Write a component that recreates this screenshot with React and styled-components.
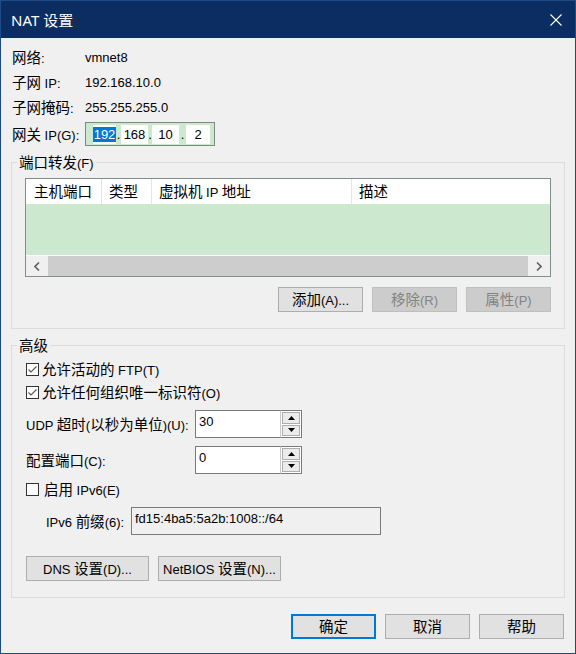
import React from 'react';
import styled, { createGlobalStyle } from 'styled-components';

const GlobalStyle = createGlobalStyle`
  * { box-sizing: border-box; }
  html, body { margin: 0; padding: 0; background: #f0f0f0; }
  body {
    font-family: "Liberation Sans", "Noto Sans CJK SC", sans-serif;
    font-size: 13px;
    color: #000;
  }
`;

const Window = styled.div`
  width: 576px;
  height: 654px;
  border: 1px solid #1f4a8a;
  background: #f0f0f0;
  display: flex;
  flex-direction: column;
`;

const TitleBar = styled.div`
  height: 37px;
  flex: none;
  background: #0b2d62;
  color: #fff;
  display: flex;
  align-items: center;
  justify-content: space-between;
  padding: 0 13px 0 10px;
  font-family: "Noto Sans", "Noto Sans CJK SC", sans-serif;
  font-size: 15px;
`;

const Body = styled.div`
  padding: 7px 10px 0 10px;
  display: flex;
  flex-direction: column;
`;

// Chinese runs are drawn a little larger than the Latin text, as in the dialog font
const TextRun = styled.span`
  white-space: pre;
`;

const Zh = styled.span`
  font-family: "Noto Sans CJK SC", sans-serif;
  font-size: 14.5px;
  line-height: 16px;
`;

const Txt = ({ children }) => {
  const parts = String(children).split(/([\u3400-\u9fff]+)/);
  return (
    <TextRun>
      {parts.map((p, i) => (i % 2 ? <Zh key={i}>{p}</Zh> : p))}
    </TextRun>
  );
};

const InfoRow = styled.div`
  display: flex;
  align-items: center;
  height: 24px;
  padding-left: 1px;
  margin-top: ${(p) => p.$top || 0}px;
`;

const InfoLabel = styled.span`
  width: 73px;
  flex: none;
`;

const IpField = styled.div`
  width: 130px;
  height: 24px;
  border: 1px solid #7d8a80;
  background: #cce8cf;
  display: flex;
  align-items: stretch;
  padding: 2px 3px 1px 7px;
`;

const IpSeg = styled.span`
  width: ${(p) => p.$w}px;
  background: #fff;
  display: flex;
  align-items: center;
  justify-content: center;
`;

const IpDot = styled.span`
  width: ${(p) => p.$w}px;
  display: flex;
  align-items: center;
  justify-content: center;
`;

const Selected = styled.span`
  background: #0078d7;
  color: #fff;
  line-height: 15px;
  padding: 0 1px;
`;

const Group = styled.fieldset`
  margin: ${(p) => p.$top}px 0 0;
  padding: 0;
  border: 1px solid #dcdcdc;
  min-width: 0;
`;

const Legend = styled.legend`
  margin-left: 5px;
  padding: 0 2px;
  line-height: 16px;
  height: 16px;
  font-size: 13px;
`;

const GroupBody = styled.div`
  display: flex;
  flex-direction: column;
  padding: ${(p) => p.$pad};
`;

const Table = styled.div`
  height: 99px;
  border: 1px solid #7f9086;
  background: #fff;
  display: flex;
  flex-direction: column;
`;

const HeaderRow = styled.div`
  height: 25px;
  display: flex;
  background: #fff;
`;

const HeaderCell = styled.div`
  width: ${(p) => (p.$w ? `${p.$w}px` : 'auto')};
  flex: ${(p) => (p.$w ? 'none' : '1')};
  border-right: ${(p) => (p.$w ? '1px solid #e5e5e5' : 'none')};
  padding-left: ${(p) => p.$pl}px;
  display: flex;
  align-items: center;
  white-space: nowrap;
  overflow: hidden;
`;

const TableBody = styled.div`
  height: 51px;
  background: #cce8cf;
  margin-bottom: 1px;
`;

const ScrollBar = styled.div`
  height: 20px;
  display: flex;
  background: #f0f0f0;
`;

const ScrollArrow = styled.div`
  width: 22px;
  flex: none;
  display: flex;
  align-items: center;
  justify-content: center;
`;

const ScrollThumb = styled.div`
  flex: 1;
  background: #cdcdcd;
`;

const ButtonRow = styled.div`
  display: flex;
  justify-content: ${(p) => p.$justify || 'flex-start'};
  gap: ${(p) => p.$gap || 9}px;
  margin-top: ${(p) => p.$top || 0}px;
  margin-right: ${(p) => p.$right || 0}px;
`;

const Button = styled.button`
  width: ${(p) => p.$w || 85}px;
  height: 25px;
  padding: 0;
  font-family: inherit;
  font-size: 13px;
  white-space: nowrap;
  color: ${(p) => (p.disabled ? '#838383' : '#000')};
  background: ${(p) => (p.disabled ? '#cccccc' : '#e1e1e1')};
  border: ${(p) =>
    p.$primary ? '2px solid #0078d7' : p.disabled ? '1px solid #bfbfbf' : '1px solid #adadad'};
  display: flex;
  align-items: center;
  justify-content: center;
`;

const CheckRow = styled.label`
  display: flex;
  align-items: center;
  height: 20px;
  white-space: nowrap;
  margin-top: ${(p) => p.$top}px;
`;

const Box = styled.span`
  width: 13px;
  height: 13px;
  flex: none;
  border: 1px solid #333;
  background: #fff;
  margin-right: ${(p) => p.$gap}px;
  display: flex;
  align-items: center;
  justify-content: center;
`;

const FieldRow = styled.div`
  display: flex;
  align-items: center;
  height: 28px;
  margin-top: ${(p) => p.$top}px;
  padding-left: ${(p) => p.$indent || 0}px;
`;

const FieldLabel = styled.span`
  width: ${(p) => p.$w}px;
  flex: none;
  white-space: nowrap;
`;

const SpinBox = styled.div`
  display: flex;
  height: 28px;
  width: 107px;
`;

const SpinText = styled.div`
  flex: 1;
  border: 1px solid #7a7a7a;
  border-right: none;
  background: #fff;
  padding: 3px 3px;
  line-height: 16px;
`;

const SpinButtons = styled.div`
  width: 22px;
  border: 1px solid #7a7a7a;
  border-left: 1px solid #c8c8c8;
  background: #fff;
  padding: 1px;
  display: flex;
  flex-direction: column;
  gap: 1px;
`;

const SpinBtn = styled.div`
  flex: 1;
  background: #ececec;
  border: 1px solid #adadad;
  display: flex;
  align-items: center;
  justify-content: center;
`;

const PrefixField = styled.div`
  width: 250px;
  height: 28px;
  border: 1px solid #7a7a7a;
  background: #f0f0f0;
  padding: 3px 3px;
  line-height: 16px;
`;

const Check = () => (
  <svg width="11" height="11" viewBox="0 0 11 11">
    <polyline points="1.5,5.5 4,8 9.5,2.5" fill="none" stroke="#5a5a5a" strokeWidth="1.2" />
  </svg>
);

const Arrow = ({ up }) => (
  <svg width="7" height="4" viewBox="0 0 7 4">
    <polygon points={up ? '0,4 7,4 3.5,0' : '0,0 7,0 3.5,4'} fill="#000" />
  </svg>
);

const Chevron = ({ left }) => (
  <svg width="6" height="9" viewBox="0 0 6 9">
    <polyline
      points={left ? '5,0.5 1,4.5 5,8.5' : '1,0.5 5,4.5 1,8.5'}
      fill="none"
      stroke="#606060"
      strokeWidth="1.6"
    />
  </svg>
);

const Spin = ({ value }) => (
  <SpinBox>
    <SpinText>{value}</SpinText>
    <SpinButtons>
      <SpinBtn>
        <Arrow up />
      </SpinBtn>
      <SpinBtn>
        <Arrow />
      </SpinBtn>
    </SpinButtons>
  </SpinBox>
);

export default function App() {
  return (
    <>
      <GlobalStyle />
      <Window>
        <TitleBar>
          <span>NAT 设置</span>
          <svg width="12" height="12" viewBox="0 0 12 12">
            <path d="M0.5 0.5 L11.5 11.5 M11.5 0.5 L0.5 11.5" stroke="#fff" strokeWidth="1.1" />
          </svg>
        </TitleBar>
        <Body>
          <InfoRow>
            <InfoLabel><Txt>网络:</Txt></InfoLabel>
            <span>vmnet8</span>
          </InfoRow>
          <InfoRow $top={1}>
            <InfoLabel><Txt>子网 IP:</Txt></InfoLabel>
            <span>192.168.10.0</span>
          </InfoRow>
          <InfoRow $top={1}>
            <InfoLabel><Txt>子网掩码:</Txt></InfoLabel>
            <span>255.255.255.0</span>
          </InfoRow>
          <InfoRow $top={3}>
            <InfoLabel><Txt>网关 IP(G):</Txt></InfoLabel>
            <IpField>
              <IpSeg $w={23}>
                <Selected>192</Selected>
              </IpSeg>
              <IpDot $w={5}>.</IpDot>
              <IpSeg $w={27}>168</IpSeg>
              <IpDot $w={4}>.</IpDot>
              <IpSeg $w={27}>10</IpSeg>
              <IpDot $w={7}>.</IpDot>
              <IpSeg $w={24}>2</IpSeg>
            </IpField>
          </InfoRow>

          <Group $top={8}>
            <Legend><Txt>端口转发(F)</Txt></Legend>
            <GroupBody $pad="8px 13px 16px 13px">
              <Table>
                <HeaderRow>
                  <HeaderCell $w={76} $pl={8}><Txt>主机端口</Txt></HeaderCell>
                  <HeaderCell $w={50} $pl={7}><Txt>类型</Txt></HeaderCell>
                  <HeaderCell $w={200} $pl={7}><Txt>虚拟机 IP 地址</Txt></HeaderCell>
                  <HeaderCell $pl={7}><Txt>描述</Txt></HeaderCell>
                </HeaderRow>
                <TableBody />
                <ScrollBar>
                  <ScrollArrow>
                    <Chevron left />
                  </ScrollArrow>
                  <ScrollThumb />
                  <ScrollArrow>
                    <Chevron />
                  </ScrollArrow>
                </ScrollBar>
              </Table>
              <ButtonRow $justify="flex-end" $top={10}>
                <Button><Txt>添加(A)...</Txt></Button>
                <Button disabled><Txt>移除(R)</Txt></Button>
                <Button disabled><Txt>属性(P)</Txt></Button>
              </ButtonRow>
            </GroupBody>
          </Group>

          <Group $top={8}>
            <Legend><Txt>高级</Txt></Legend>
            <GroupBody $pad="0 12px 16px 14px">
              <CheckRow $top={6}>
                <Box $gap={3}>
                  <Check />
                </Box>
                <Txt>允许活动的 FTP(T)</Txt>
              </CheckRow>
              <CheckRow $top={3}>
                <Box $gap={3}>
                  <Check />
                </Box>
                <Txt>允许任何组织唯一标识符(O)</Txt>
              </CheckRow>
              <FieldRow $top={8}>
                <FieldLabel $w={169}><Txt>UDP 超时(以秒为单位)(U):</Txt></FieldLabel>
                <Spin value="30" />
              </FieldRow>
              <FieldRow $top={8}>
                <FieldLabel $w={169}><Txt>配置端口(C):</Txt></FieldLabel>
                <Spin value="0" />
              </FieldRow>
              <CheckRow $top={5}>
                <Box $gap={5} />
                <Txt>启用 IPv6(E)</Txt>
              </CheckRow>
              <FieldRow $top={8} $indent={20}>
                <FieldLabel $w={85}><Txt>IPv6 前缀(6):</Txt></FieldLabel>
                <PrefixField>fd15:4ba5:5a2b:1008::/64</PrefixField>
              </FieldRow>
              <ButtonRow $top={21} $gap={9}>
                <Button $w={123}><Txt>DNS 设置(D)...</Txt></Button>
                <Button $w={123}><Txt>NetBIOS 设置(N)...</Txt></Button>
              </ButtonRow>
            </GroupBody>
          </Group>

          <ButtonRow $justify="flex-end" $top={16} $right={1}>
            <Button $primary><Txt>确定</Txt></Button>
            <Button><Txt>取消</Txt></Button>
            <Button><Txt>帮助</Txt></Button>
          </ButtonRow>
        </Body>
      </Window>
    </>
  );
}
